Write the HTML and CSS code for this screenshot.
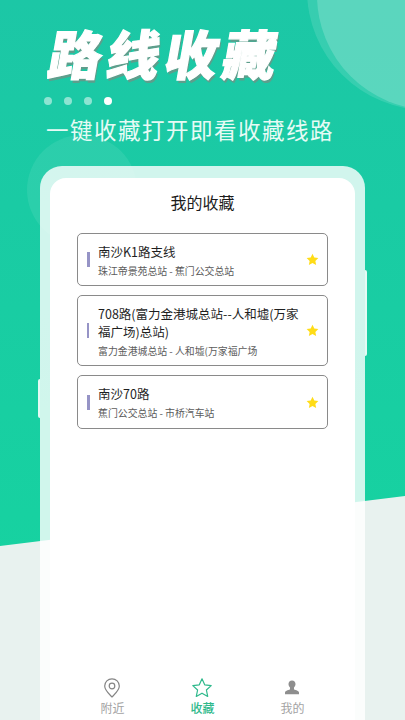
FILE: index.html
```html
<!DOCTYPE html>
<html lang="zh-CN">
<head>
<meta charset="utf-8">
<title>路线收藏</title>
<link rel="stylesheet" href="styles.css">
</head>
<body>
<div class="page">
  <div class="backdrop">
    <div class="circle circle-a"></div>
    <div class="circle circle-b"></div>
    <div class="circle circle-c"></div>
  </div>
  <header class="hero">
    <h1 class="hero-title">路线收藏</h1>
    <div class="dots"><i class="dot"></i><i class="dot"></i><i class="dot"></i><i class="dot dot-on"></i></div>
    <p class="hero-sub">一键收藏打开即看收藏线路</p>
  </header>
  <section class="phone">
    <span class="side-key side-key-left"></span>
    <span class="side-key side-key-right"></span>
    <div class="screen">
      <h2 class="screen-title">我的收藏</h2>
      <ul class="routes">
        <li class="route">
          <span class="route-bar"></span>
          <div class="route-text">
            <div class="route-name">南沙K1路支线</div>
            <div class="route-stops">珠江帝景苑总站 - 蕉门公交总站</div>
          </div>
          <svg class="route-star" viewBox="0 0 24 24"><path d="M12 1.5l3.3 6.9 7.5 1-5.5 5.2 1.4 7.5L12 18.5l-6.7 3.6 1.4-7.5L1.2 9.4l7.5-1z"/></svg>
        </li>
        <li class="route route-tall">
          <span class="route-bar route-bar-thin"></span>
          <div class="route-text">
            <div class="route-name">708路(富力金港城总站--人和墟(万家福广场)总站)</div>
            <div class="route-stops">富力金港城总站 - 人和墟(万家福广场</div>
          </div>
          <svg class="route-star" viewBox="0 0 24 24"><path d="M12 1.5l3.3 6.9 7.5 1-5.5 5.2 1.4 7.5L12 18.5l-6.7 3.6 1.4-7.5L1.2 9.4l7.5-1z"/></svg>
        </li>
        <li class="route route-last">
          <span class="route-bar"></span>
          <div class="route-text">
            <div class="route-name">南沙70路</div>
            <div class="route-stops">蕉门公交总站 - 市桥汽车站</div>
          </div>
          <svg class="route-star" viewBox="0 0 24 24"><path d="M12 1.5l3.3 6.9 7.5 1-5.5 5.2 1.4 7.5L12 18.5l-6.7 3.6 1.4-7.5L1.2 9.4l7.5-1z"/></svg>
        </li>
      </ul>
      <nav class="tabs">
        <div class="tab">
          <svg class="tab-icon" viewBox="0 0 20 20"><path class="line-gray" d="M10 19c-1.200-1.600-7.300-6-7.300-10.900a7.300 7.300 0 0 1 14.600 0c0 4.900-6.100 9.300-7.300 10.900z"/><circle class="line-gray" cx="10" cy="8" r="2.800"/></svg>
          <span>附近</span>
        </div>
        <div class="tab tab-on">
          <svg class="tab-icon" viewBox="0 0 20 20"><path class="line-green" d="M10 .8l2.700 6 6.500.8-4.800 4.400 1.300 6.400L10 15.200l-5.700 3.200 1.300-6.400L.8 7.600l6.500-.8z"/></svg>
          <span>收藏</span>
        </div>
        <div class="tab">
          <svg class="tab-icon" viewBox="0 0 20 20"><path class="fill-gray" d="M10 2.500c2.200 0 3.500 1.500 3.500 3.600 0 1.500-.7 2.800-1.500 3.500v1.600c0 .9 5 1 5 3.300v1.800H3v-1.800c0-2.300 5-2.400 5-3.300V9.600C7.200 8.900 6.500 7.600 6.500 6.100c0-2.100 1.300-3.600 3.500-3.600z"/></svg>
          <span>我的</span>
        </div>
      </nav>
    </div>
  </section>
</div>
</body>
</html>
```
FILE: styles.css
```css
* { box-sizing: border-box; }
html, body { margin: 0; padding: 0; }
body { font-family: "Noto Sans CJK SC", Roboto, sans-serif; }
.page {
  position: relative;
  width: 405px;
  height: 720px;
  overflow: hidden;
  background: #e8f2ef;
  display: flex;
  flex-direction: column;
}
.backdrop {
  position: absolute;
  inset: 0;
  background: linear-gradient(180deg, #1cc7a6 0%, #15d59f 100%);
  clip-path: polygon(0 0, 405px 0, 405px 496px, 0 546px);
  overflow: hidden;
}
.circle { position: absolute; border-radius: 50%; }
.circle-a { left: 307px; top: -130px; width: 240px; height: 240px; background: rgba(255,255,255,.12); }
.circle-b { left: 317px; top: -120px; width: 230px; height: 230px; background: rgba(255,255,255,.18); }
.circle-c { left: 27px; top: 135px; width: 110px; height: 110px; background: rgba(255,255,255,.08); }
.hero {
  position: relative;
  height: 166px;
  padding-left: 46px;
  color: #fff;
}
.hero-title {
  margin: 0 0 0 -1px;
  padding-top: 18px;
  height: 89px;
  font-size: 53px;
  line-height: 68px;
  font-weight: 900;
  letter-spacing: 5px;
  white-space: nowrap;
  color: #fff;
  -webkit-text-stroke: 1.200px #fff;
  text-shadow: 2px 3px 0 #5e9e8c;
  transform: skewX(-10deg);
  transform-origin: 0 80px;
}
.dots { display: flex; gap: 12px; margin: 8px 0 0 -2px; height: 8px; }
.dot { width: 8px; height: 8px; border-radius: 50%; background: rgba(255,255,255,.5); }
.dot-on { background: #fff; }
.hero-sub {
  margin: 9px 0 0 0;
  font-size: 22.500px;
  line-height: 30px;
  letter-spacing: 1.500px;
  white-space: nowrap;
  color: #e6fbf5;
}
.phone {
  position: relative;
  flex: 1;
  margin: 0 40px;
  padding: 12px 10px 0;
  border-radius: 22px 22px 0 0;
  background: rgba(255,255,255,.8);
  display: flex;
  min-height: 0;
}
.side-key { position: absolute; width: 2px; background: #e4faf4; }
.side-key-left { left: -2px; top: 213px; height: 39px; border-radius: 2px 0 0 2px; }
.side-key-right { right: -2px; top: 104px; height: 86px; border-radius: 0 2px 2px 0; }
.screen {
  flex: 1;
  background: #fff;
  border-radius: 16px 16px 0 0;
  display: flex;
  flex-direction: column;
  padding: 0 27px;
}
.screen-title {
  margin: 0;
  padding-top: 13px;
  height: 55px;
  font-size: 16px;
  line-height: 23px;
  font-weight: 400;
  text-align: center;
  color: #1c1c1c;
}
.routes {
  list-style: none;
  margin: 0;
  padding: 0;
  display: flex;
  flex-direction: column;
  gap: 9px;
}
.route {
  display: flex;
  align-items: center;
  height: 53px;
  border: 1px solid #8a8a8a;
  border-radius: 5px;
  padding: 0 8px 0 9px;
}
.route-tall { height: 71px; }
.route-last { height: 54px; }
.route-bar { flex: none; width: 3px; height: 15px; background: #9694c6; margin-right: 8px; }
.route-bar-thin { width: 2px; margin-right: 9px; }
.route-text { flex: 1; min-width: 0; padding-top: 1px; }
.route-name { font-size: 12.500px; line-height: 18px; color: #1f1f1f; }
.route-stops { font-size: 9.900px; line-height: 14px; margin-top: 3px; color: #5c5c5c; white-space: nowrap; }
.route-star { flex: none; width: 13px; height: 13px; margin-left: 4px; fill: #ffdc17; }
.tabs {
  margin: auto -10px 0;
  height: 42px;
  display: grid;
  grid-template-columns: repeat(3, 90px);
  justify-content: center;
  justify-items: center;
}
.tab {
  display: flex;
  flex-direction: column;
  align-items: center;
  font-size: 12px;
  line-height: 16px;
  color: #a3a3a3;
}
.tab-on { color: #2fb98c; font-weight: 500; }
.tab-icon { width: 20px; height: 20px; margin-bottom: 2px; display: block; }
.line-gray { fill: none; stroke: #858585; stroke-width: 1.200; }
.line-green { fill: none; stroke: #2fb98c; stroke-width: 1.200; stroke-linejoin: round; }
.fill-gray { fill: #8e8e8e; }
```
